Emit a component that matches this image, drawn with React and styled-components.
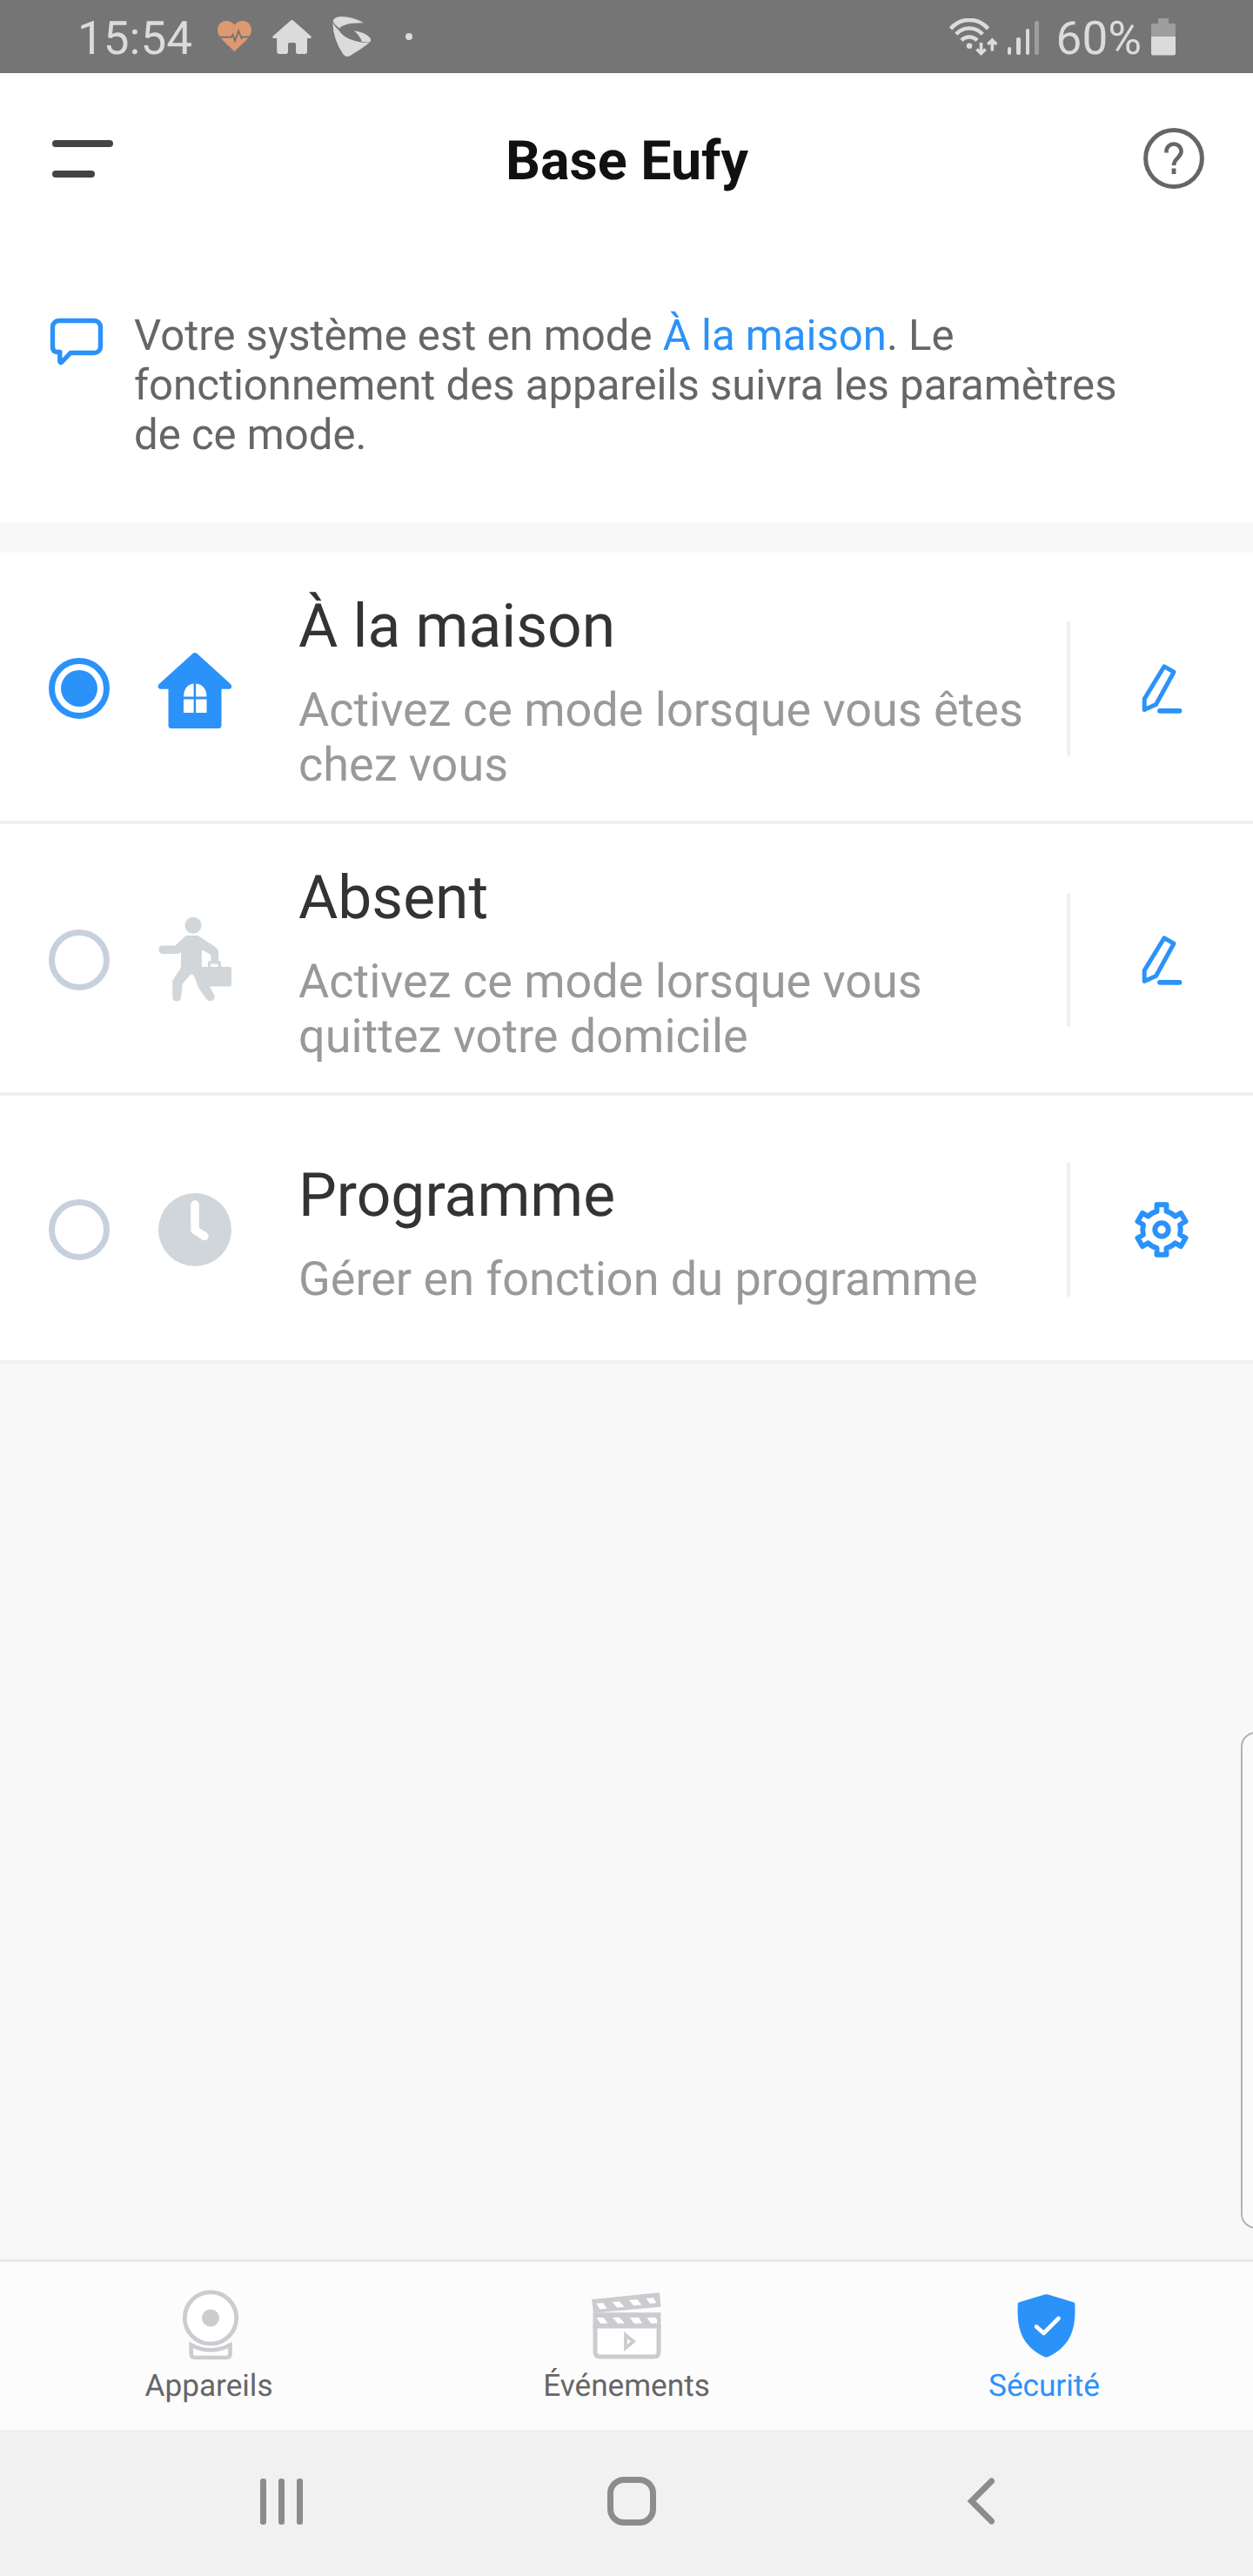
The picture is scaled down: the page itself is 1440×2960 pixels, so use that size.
import { useState, useCallback } from 'react';
import styled, { createGlobalStyle } from 'styled-components';

const BLUE = '#2b92f9';
const MUTED = '#d1d6da';
const TAB_GREY = '#cbccd0';
const STATUS = '#dbdbdb';

function HeartIcon() {
  return (
    <svg width="39" height="36" viewBox="0 0 39 36">
      <path
        d="M19.5 35.5C15 29 0 20.500 0 10.500C0 4.500 4.500 0 10 0c4 0 7.500 2 9.500 4.800C21.500 2 25 0 29 0c5.500 0 10 4.500 10 10.500C39 20.500 24 29 19.500 35.500z"
        fill="#dd9970"
      />
      <path
        d="M2.500 18.800h13l2-2.800 2.500 7 4.200-11.500 3.400 8.500 1.400-1.600h7.500"
        fill="none"
        stroke="#757575"
        strokeWidth="2"
      />
    </svg>
  );
}

function SmallHouseIcon() {
  return (
    <svg width="45" height="39" viewBox="0 0 45 39" fill={STATUS}>
      <path d="M20.800 .8q1.700-1.500 3.400 0L44.500 18.700q1 2.300-1.500 2.300h-3V36q0 3-2.500 3H29.500q-2.500 0-2.500-3V28q0-2-2-2h-5q-2 0-2 2v8q0 3-2.500 3H8q-2.800 0-2.800-3V21H2Q-.5 21 .5 18.700z" />
    </svg>
  );
}

function SwooshIcon() {
  return (
    <svg width="45" height="46" viewBox="0 0 45 46" fill={STATUS}>
      <path d="M.5 5Q2 .3 10 0q13 0 26 7.300Q14 7 8 13.500Q2 9 .5 5z" />
      <path d="M.3 7Q3 12 7.200 15.500Q16 29.500 42.500 30.300Q31 39 20.500 45q-5 2.500-8-1.500Q1 27 .3 7z" />
      <path d="M24.800 16.300Q38 18.500 43 24q1.800 2.600.5 5.300-4.500.6-9.500-.2Q31.500 22 24.800 16.300z" />
    </svg>
  );
}

function WifiIcon() {
  return (
    <svg width="57" height="43" viewBox="0 0 57 43">
      <g fill="none" stroke={STATUS} strokeWidth="4.600">
        <path d="M2.500 12A28 28 0 0 1 45.500 12" />
        <path d="M8.800 18.300A20.500 20.500 0 0 1 39.200 18.300" />
        <path d="M15 25.300A12.500 12.500 0 0 1 33 25.300" />
      </g>
      <circle cx="24" cy="31.800" r="3.300" fill={STATUS} />
      <path
        d="M37.500 28v12M32.500 35.500l5 5 5-5M50.300 37.500V25.500M45.300 30l5-5 5 5"
        fill="none"
        stroke={STATUS}
        strokeWidth="3.600"
      />
    </svg>
  );
}

function BatteryIcon() {
  return (
    <svg width="28" height="43" viewBox="0 0 28 43">
      <path d="M9 0h10q1 0 1 1v5h6q2 0 2 2v15H0V8q0-2 2-2h6V1q0-1 1-1z" fill="#9e9e9e" />
      <path d="M0 21h28v19.500q0 2-2 2H2q-2 0-2-2z" fill={STATUS} />
    </svg>
  );
}

function HelpIcon() {
  return (
    <svg width="70" height="70" viewBox="0 0 70 70" fill="none" stroke="#666">
      <circle cx="35" cy="35" r="32.400" strokeWidth="5" />
      <path
        d="M26.500 28.500v-1.500a8.500 8.500 0 0 1 17 0c0 3.500-2 5.200-4.200 7.600C36.500 37.500 35 39.500 35 43"
        strokeWidth="4.600"
      />
      <path d="M35 46.500v6.500" strokeWidth="4.800" />
    </svg>
  );
}

function BubbleIcon() {
  return (
    <svg width="62" height="56" viewBox="0 0 62 56">
      <path
        d="M24 40.500H51.500a7 7 0 0 0 7-7V10.500a7 7 0 0 0-7-7H10.500a7 7 0 0 0-7 7V33q0 6 4.500 6.500h3.800V50q0 2.500 2.200 1z"
        fill="none"
        stroke={BLUE}
        strokeWidth="5.400"
        strokeLinejoin="round"
      />
    </svg>
  );
}

function HouseIcon() {
  return (
    <svg width="90" height="100" viewBox="0 0 90 100">
      <path
        d="M42.500 10q2.500-2 5 0L86 45q2 2.500.8 4.200-.8 1.500-3 1.500H75.500V92.500q0 3.500-3.500 3.500H18q-3.500 0-3.500-3.500V50.700H6q-2.200 0-3-1.500-1.200-1.700.8-4.200z"
        fill={BLUE}
      />
      <path
        d="M32 59.500Q32.500 46 43.600 44.500V59.500zM46.200 44.500Q58 46 58.500 59.500H46.200zM32 62.500h11.600v15.500H32zM46.200 62.500h12.300v15.500H46.200z"
        fill="#fff"
      />
    </svg>
  );
}

function WalkerIcon() {
  return (
    <svg width="90" height="100" viewBox="0 0 90 100" fill={MUTED}>
      <circle cx="43" cy="10.300" r="9.500" />
      <path d="M36.500 22H46.500q3 0 5 2L69 35.500q3 2.500 3 5.500V51.300h1.500q1.500 0 1.500 1.500V58H85q2 0 2 2v18.500q0 2-2 2H62l5 9.500q2 4-1.500 6.500-4 2-7-1.500Q50 84 48.500 80L44 68.500q-2.500-4-5.500 0L30.700 77.500 29 94q-1.500 4-5.500 3.500-4-.5-4.200-5V73.500l9.700-14.500V41q-1.500 2-4 2H7.500q-4-.5-4-4.800 0-4.500 4-4.700H22.500L33 23.500q1.500-1.500 3.500-1.500z" />
      <path
        d="M52.900 39.500q1-1 2.500 0L62 43.500q1.400 1 1.400 2.500v5.300h-1.900q-1.500 0-1.500 1.500V58H52.900z"
        fill="#fff"
      />
      <path d="M63 54.500h8.500V58H63z" fill="#fff" />
    </svg>
  );
}

function ClockIcon() {
  return (
    <svg width="90" height="100" viewBox="0 0 90 100">
      <circle cx="45" cy="50" r="42" fill={MUTED} />
      <path
        d="M45 21v29.500l11 7"
        fill="none"
        stroke="#fff"
        strokeWidth="9.500"
        strokeLinecap="round"
        strokeLinejoin="round"
      />
    </svg>
  );
}

function PencilIcon() {
  return (
    <svg width="48" height="60" viewBox="0 0 48 60" fill="none" stroke={BLUE}>
      <path
        d="M27 4.800L38 11.200 17.500 48.500 4.200 54.500V42z"
        strokeWidth="5"
        strokeLinejoin="round"
      />
      <path d="M22 55.800h22.500" strokeWidth="5.800" strokeLinecap="round" />
    </svg>
  );
}

// Six-tooth outline: each tooth is one straight notch, joined by short arcs
function gearPath() {
  const radius = 21.8;
  const half = 5.5;
  const top = 28.7;
  const base = Math.sqrt(radius * radius - half * half);
  const parts = [];
  for (let i = 0; i < 6; i += 1) {
    const a = (i * Math.PI) / 3;
    const at = (x, y) =>
      `${(x * Math.cos(a) - y * Math.sin(a)).toFixed(2)} ${(x * Math.sin(a) + y * Math.cos(a)).toFixed(2)}`;
    parts.push(i === 0 ? `M${at(-half, -base)}` : `A${radius} ${radius} 0 0 1 ${at(-half, -base)}`);
    parts.push(`L${at(-half, -top)}L${at(half, -top)}L${at(half, -base)}`);
  }
  return `${parts.join('')}A${radius} ${radius} 0 0 1 ${-half} ${-base}Z`;
}

function GearIcon() {
  return (
    <svg width="64" height="64" viewBox="-32 -32 64 64" fill="none" stroke={BLUE}>
      <path d={gearPath()} strokeWidth="5.900" strokeLinejoin="round" />
      <circle r="7.700" strokeWidth="6" />
    </svg>
  );
}

function CameraIcon() {
  return (
    <svg width="66" height="82" viewBox="0 0 66 82" fill="none" stroke={TAB_GREY}>
      <circle cx="33" cy="32.500" r="29.700" strokeWidth="4.800" fill="#fff" />
      <circle cx="33" cy="32.500" r="10" fill={TAB_GREY} stroke="none" />
      <path
        d="M10.700 63.500Q33 75.500 55.500 63.500V73.500q0 4.500-4.500 4.500H15.200q-4.500 0-4.500-4.500z"
        strokeWidth="4.600"
        fill="#fff"
      />
    </svg>
  );
}

function ClapperIcon() {
  return (
    <svg width="81" height="78" viewBox="0 0 81 78">
      <path d="M4 40V69.500q0 5.500 5.500 5.500h62q5.500 0 5.500-5.500V40z" fill="#fff" stroke={TAB_GREY} strokeWidth="5" />
      <g fill={TAB_GREY}>
        <path d="M0 9.300L78 1.300 79.500 17.700 2 24.700z" />
        <path d="M1.500 24.300h78v17.700h-78z" />
      </g>
      <g fill="#fff">
        <path d="M5.500 13.700l7.500-.5 4.800 6.600-8.500.6zM23.500 12.100l8.500-.7 5.500 6.600-8.500.6zM43 10l9.500-.7 5 6.300-9.500.6zM62.500 8l8.500-.8 3.500 6-7.500.7z" />
        <path d="M5.500 30h8.300l4.600 6.700H10zM24 30h8l6 6.700h-8zM44 30h10l4 6.700H48.500zM63.500 30h9.500l2 2v4.700H68z" />
      </g>
      <path d="M39 50v15l9-7.500z" fill="none" stroke={TAB_GREY} strokeWidth="3.800" />
    </svg>
  );
}

function ShieldIcon() {
  return (
    <svg width="67" height="73" viewBox="0 0 67 73">
      <path
        d="M31 .8q2.500-1.300 5 0L65 9.500q1.300.5 1.300 2C67.500 38 63 59 36 72q-2.500 1.200-5 0C4 59-.5 38 .7 11.500q0-1.500 1.300-2z"
        fill={BLUE}
      />
      <path
        d="M22 37.500l8.500 7.500L47.500 28"
        fill="none"
        stroke="#fff"
        strokeWidth="4.600"
        strokeLinecap="round"
        strokeLinejoin="round"
      />
    </svg>
  );
}

function BackIcon() {
  return (
    <svg width="33" height="54" viewBox="0 0 33 54">
      <path
        d="M28.500 4L5.500 27l23 23"
        fill="none"
        stroke="#8c8c8c"
        strokeWidth="7"
        strokeLinecap="round"
      />
    </svg>
  );
}

const MODES = [
  {
    id: 'home',
    title: 'À la maison',
    text: 'Activez ce mode lorsque vous êtes chez vous',
    icon: HouseIcon,
    action: PencilIcon,
    height: 312,
  },
  {
    id: 'away',
    title: 'Absent',
    text: 'Activez ce mode lorsque vous quittez votre domicile',
    icon: WalkerIcon,
    action: PencilIcon,
    height: 312,
  },
  {
    id: 'schedule',
    title: 'Programme',
    text: 'Gérer en fonction du programme',
    icon: ClockIcon,
    action: GearIcon,
    height: 308,
  },
];

const TABS = [
  { label: 'Appareils', icon: CameraIcon, shift: 4 },
  { label: 'Événements', icon: ClapperIcon, shift: 0 },
  { label: 'Sécurité', icon: ShieldIcon, shift: 4, active: true },
];

export default function App() {
  const [selected, setSelected] = useState('home');

  const handleSelect = useCallback((id) => () => setSelected(id), []);

  return (
    <>
      <GlobalStyle />
      <Screen>
        <StatusBar>
          <Time>15:54</Time>
          <Notifications>
            <HeartIcon />
            <SmallHouseIcon />
            <SwooshIcon />
          </Notifications>
          <MoreDot />
          <SystemStatus>
            <WifiIcon />
            <Signal>
              <SignalBar $height={9} />
              <SignalBar $height={20} />
              <SignalBar $height={30} />
              <SignalBar $height={39} $off />
            </Signal>
            <Percent>60%</Percent>
            <BatteryIcon />
          </SystemStatus>
        </StatusBar>

        <Header>
          <MenuButton>
            <MenuLine $width={70} />
            <MenuLine $width={49} />
          </MenuButton>
          <Title>Base Eufy</Title>
          <HelpIcon />
        </Header>

        <Notice>
          <BubbleIcon />
          <NoticeText>
            Votre système est en mode <Highlight>À la maison</Highlight>. Le
            fonctionnement des appareils suivra les paramètres de ce mode.
          </NoticeText>
        </Notice>

        <ModeList>
          {MODES.map(({ id, title, text, icon: Icon, action: Action, height }) => (
            <ModeRow key={id} $height={height} onClick={handleSelect(id)}>
              <Radio $checked={selected === id} />
              <Icon />
              <ModeBody>
                <ModeTitle>{title}</ModeTitle>
                <ModeText>{text}</ModeText>
              </ModeBody>
              <ModeAction>
                <Action />
              </ModeAction>
            </ModeRow>
          ))}
        </ModeList>

        <EdgeHandle />

        <TabBar>
          {TABS.map(({ label, icon: Icon, active, shift }) => (
            <Tab key={label} $active={active}>
              <TabIcon $shift={shift}>
                <Icon />
              </TabIcon>
              {label}
            </Tab>
          ))}
        </TabBar>

        <NavBar>
          <Recents>
            <RecentsLine />
            <RecentsLine />
            <RecentsLine />
          </Recents>
          <HomeKey />
          <BackIcon />
        </NavBar>
      </Screen>
    </>
  );
}

const GlobalStyle = createGlobalStyle`
  * {
    box-sizing: border-box;
  }

  body {
    margin: 0;
    font-family: Roboto, sans-serif;
    text-rendering: geometricPrecision;
  }

  svg {
    display: block;
    flex-shrink: 0;
  }
`;

const Screen = styled.div`
  position: relative;
  display: flex;
  flex-direction: column;
  width: 1440px;
  height: 2960px;
  overflow: hidden;
  background: #f8f8f8;
`;

const StatusBar = styled.div`
  display: flex;
  align-items: center;
  height: 84px;
  padding: 0 89px;
  background: #757575;
  color: ${STATUS};
  font-size: 53px;
  line-height: 80px;
`;

const Time = styled.div`
  width: 161px;
  padding-top: 4px;
`;

const Notifications = styled.div`
  display: flex;
  align-items: center;
  gap: 24px;
`;

const MoreDot = styled.div`
  width: 8px;
  height: 8px;
  margin-left: 39px;
  border-radius: 50%;
  background: ${STATUS};
`;

const SystemStatus = styled.div`
  display: flex;
  align-items: center;
  margin-left: auto;
`;

const Signal = styled.div`
  display: flex;
  align-items: flex-end;
  gap: 6px;
  height: 41px;
  margin: 0 20px 0 11px;
`;

const SignalBar = styled.div`
  width: 4.5px;
  height: ${({ $height }) => $height}px;
  border-radius: 2px;
  background: ${({ $off }) => ($off ? '#9e9e9e' : STATUS)};
`;

const Percent = styled.div`
  padding-top: 4px;
  margin-right: 11px;
`;

const Header = styled.header`
  display: flex;
  align-items: center;
  justify-content: space-between;
  height: 196px;
  padding: 0 56px 0 60px;
  background: #fff;
`;

const MenuButton = styled.div`
  display: flex;
  flex-direction: column;
  gap: 27px;
  width: 70px;
`;

const MenuLine = styled.div`
  width: ${({ $width }) => $width}px;
  height: 8px;
  border-radius: 4px;
  background: #444;
`;

const Title = styled.h1`
  margin: 0;
  padding: 7px 3px 0 0;
  color: #111;
  font-size: 62.7px;
  font-weight: 700;
  line-height: 74px;
`;

const Notice = styled.section`
  display: flex;
  align-items: flex-start;
  height: 320px;
  padding: 77px 120px 0 57px;
  background: #fff;

  svg {
    margin-top: 8px;
  }
`;

const NoticeText = styled.p`
  margin: 0 0 0 35px;
  color: #666;
  font-size: 49.1px;
  line-height: 57px;
`;

const Highlight = styled.span`
  color: ${BLUE};
`;

const ModeList = styled.div`
  margin-top: 35px;
`;

const ModeRow = styled.div`
  display: flex;
  align-items: center;
  height: ${({ $height }) => $height}px;
  padding-left: 56px;
  background: #fff;
  box-shadow: inset 0 -4px #eff0f1;
`;

const Radio = styled.div`
  display: flex;
  flex-shrink: 0;
  width: 70px;
  height: 70px;
  margin-right: 53px;
  padding: 7px;
  border: 7px solid ${({ $checked }) => ($checked ? BLUE : '#c7d1dc')};
  border-radius: 50%;

  &::before {
    content: '';
    flex: 1;
    border-radius: 50%;
    background: ${({ $checked }) => ($checked ? BLUE : 'transparent')};
  }
`;

const ModeBody = styled.div`
  flex: 1;
  padding: 8px 40px 0 74px;
`;

const ModeTitle = styled.div`
  color: #333;
  font-size: 69.5px;
  line-height: 82px;
`;

const ModeText = styled.div`
  margin-top: 24px;
  color: #999;
  font-size: 54px;
  line-height: 63px;
`;

const ModeAction = styled.div`
  display: flex;
  align-items: center;
  justify-content: center;
  width: 214px;
  height: 154px;
  border-left: 4px solid #eff0f1;
`;

const EdgeHandle = styled.div`
  position: absolute;
  top: 1990px;
  right: -20px;
  width: 34px;
  height: 571px;
  border: 2px solid #b3b3b3;
  border-radius: 20px;
  background: #fafafa;
`;

const TabBar = styled.nav`
  display: grid;
  grid-template-columns: repeat(3, 1fr);
  height: 196px;
  margin-top: auto;
  border-top: 3px solid #e8e8e8;
  background: #fcfcfc;
`;

const Tab = styled.div`
  display: flex;
  flex-direction: column;
  align-items: center;
  padding-top: 31px;
  color: ${({ $active }) => ($active ? BLUE : '#666')};
  font-size: 35.2px;
  line-height: 41px;
`;

const TabIcon = styled.div`
  display: flex;
  align-items: center;
  height: 84px;
  margin-bottom: 7px;
  padding-left: ${({ $shift }) => $shift}px;
`;

const NavBar = styled.nav`
  display: flex;
  align-items: center;
  justify-content: space-between;
  height: 168px;
  padding: 0 296px 4px 299px;
  background: #f1f1f1;
`;

const Recents = styled.div`
  display: flex;
  gap: 14px;
`;

const RecentsLine = styled.div`
  width: 7px;
  height: 53px;
  border-radius: 3px;
  background: #8c8c8c;
`;

const HomeKey = styled.div`
  width: 56px;
  height: 56px;
  margin-right: 8px;
  border: 7px solid #8c8c8c;
  border-radius: 19px;
`;
